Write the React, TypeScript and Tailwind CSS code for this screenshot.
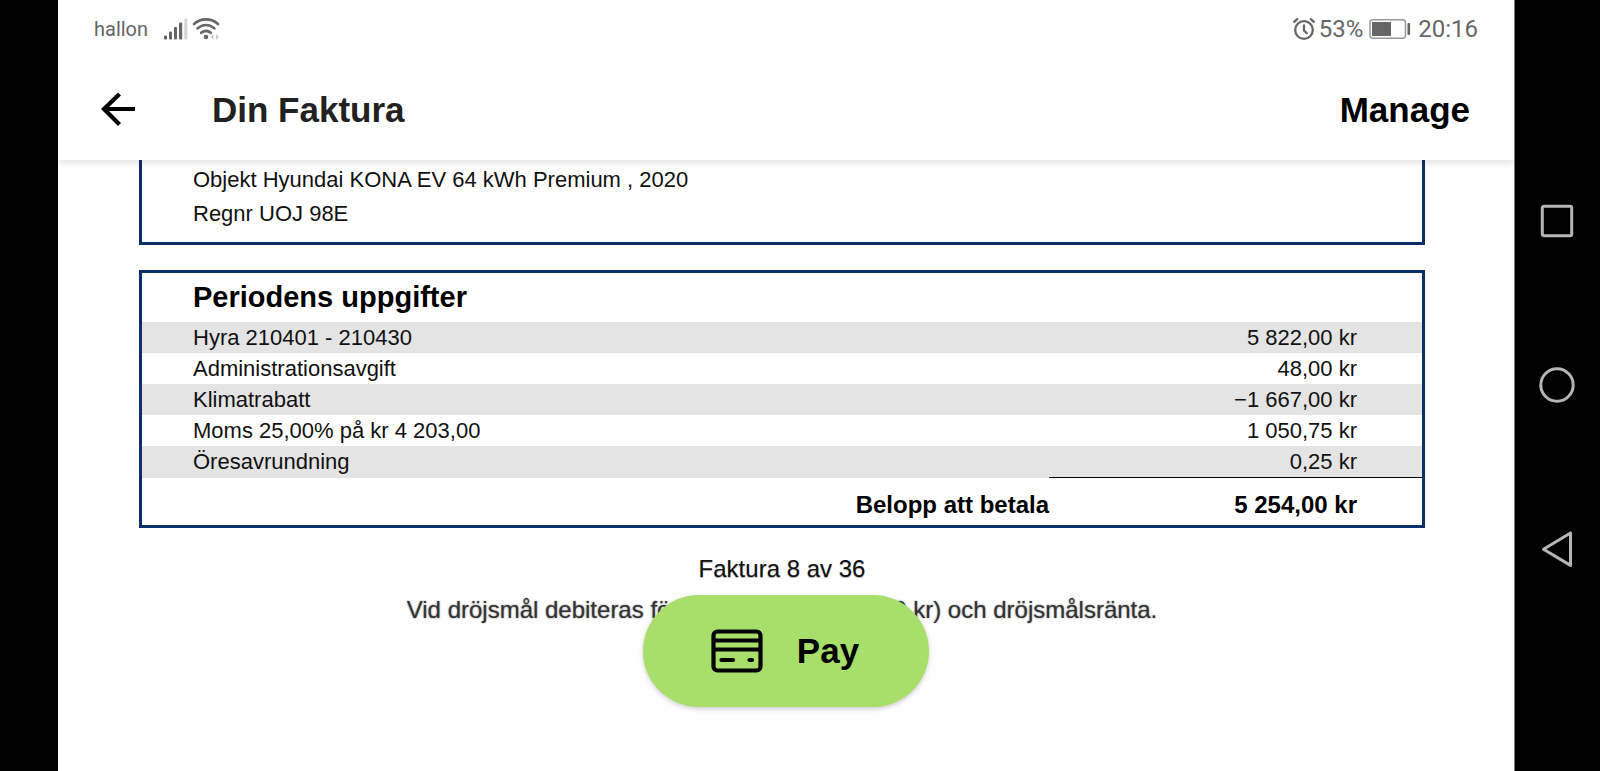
interface InvoiceRow {
  label: string;
  amount: string;
}

const rows: InvoiceRow[] = [
  { label: 'Hyra 210401 - 210430', amount: '5 822,00 kr' },
  { label: 'Administrationsavgift', amount: '48,00 kr' },
  { label: 'Klimatrabatt', amount: '−1 667,00 kr' },
  { label: 'Moms 25,00% på kr 4 203,00', amount: '1 050,75 kr' },
  { label: 'Öresavrundning', amount: '0,25 kr' },
];

function StatusBar() {
  return (
    <div className="flex h-[58px] items-center justify-between pl-9 pr-9 font-[Roboto,sans-serif] text-[#666666]">
      <div className="flex items-center">
        <span className="text-xl leading-6">hallon</span>
        <svg className="ml-4 h-[22px] w-6" viewBox="0 0 24 22" fill="#666666">
          <rect x="0" y="17.5" width="3" height="4" rx="1" />
          <rect x="5" y="13.5" width="3" height="8" rx="1" />
          <rect x="10" y="9" width="3" height="12.5" rx="1" />
          <rect x="15" y="4.5" width="3.2" height="17" rx="1" />
          <rect x="20.3" y="0.5" width="3" height="21" rx="1" fill="#d4d4d4" />
        </svg>
        <svg className="ml-1 h-[22px] w-7" viewBox="0 0 28 22" fill="none" stroke="#666666" strokeWidth="2.6" strokeLinecap="round">
          <path d="M2 6C8.8-.2 19.2-.2 26 6" />
          <path d="M5.5 10.4c5-4.6 12-4.6 17 0" />
          <path d="M9.2 14.8c3-2.5 6.6-2.5 9.6 0" />
          <circle cx="14" cy="19" r="2.3" fill="#666666" stroke="none" />
          <path d="M21.5 16v6l-3-3zM24 16v6l3-3z" fill="#cccccc" stroke="none" />
        </svg>
      </div>
      <div className="flex items-center text-2xl">
        <svg className="mr-1 h-[22px] w-[22px]" viewBox="0 0 22 22" fill="none" stroke="#666666" strokeWidth="2.3" strokeLinecap="round">
          <circle cx="11" cy="12" r="8.8" />
          <path d="M11 7.5v4.9l2.8 2.8M1.2 3.8l3-2.6M20.8 3.8l-3-2.6" />
        </svg>
        <span>53%</span>
        <svg className="ml-1.5 mr-[7px] h-5 w-[42px]" viewBox="0 0 42 20" fill="#666666">
          <rect x="1" y="0.8" width="35.5" height="18.4" rx="3" fill="none" stroke="#999999" strokeWidth="1.5" />
          <rect x="3" y="3" width="19" height="14" />
          <rect x="38.5" y="4" width="2.6" height="12" rx="1" />
        </svg>
        <span>20:16</span>
      </div>
    </div>
  );
}

function SystemNav() {
  return (
    <nav className="flex w-[86px] shrink-0 flex-col items-center justify-center gap-32 border-l border-[#777777] bg-black pr-0.5 pb-0.5">
      <button aria-label="Recent apps">
        <svg className="block size-9" viewBox="0 0 36 36" fill="none" stroke="#b5b5b5" strokeWidth="3">
          <rect x="3.3" y="3.3" width="29.4" height="29.4" rx="1.5" />
        </svg>
      </button>
      <button aria-label="Home">
        <svg className="block size-9" viewBox="0 0 36 36" fill="none" stroke="#b5b5b5" strokeWidth="3">
          <circle cx="18" cy="18" r="16.2" />
        </svg>
      </button>
      <button aria-label="Back">
        <svg className="block size-9" viewBox="0 0 36 36" fill="none" stroke="#b5b5b5" strokeWidth="3" strokeLinejoin="round">
          <path d="M31.5 2v32.4L4.5 18.2z" />
        </svg>
      </button>
    </nav>
  );
}

export default function App() {
  return (
    <div className="flex min-h-screen bg-black font-['Liberation_Sans',Arial,sans-serif]">
      <div className="w-[58px] shrink-0" />

      <div className="relative flex-1 overflow-hidden bg-white">
        <header className="relative bg-white shadow-[0_2px_8px_rgba(0,0,0,0.14)]">
          <StatusBar />
          <div className="flex items-center justify-between pt-[26px] pb-6 pl-[42px] pr-11">
            <div className="flex items-center">
              <button aria-label="Go back">
                <svg className="block size-9" viewBox="0 0 36 36" fill="none" stroke="#000000" strokeWidth="4.2">
                  <path d="M35 17H4M19.5 2L4 17l15.5 15.5" />
                </svg>
              </button>
              <h1 className="ml-[76px] text-[35px] leading-[52px] font-bold text-[#212121]">Din Faktura</h1>
            </div>
            <button className="text-[35px] leading-[52px] font-bold text-black">Manage</button>
          </div>
        </header>

        <main className="pl-[81px] pr-[89px] text-[22px] text-[#111111]">
          <section className="border-x-[3px] border-b-[3px] border-[#0b2f69] pt-[3px] pb-[11px] pl-[51px] leading-[34px]">
            <p>Objekt Hyundai KONA EV 64 kWh Premium , 2020</p>
            <p>Regnr UOJ 98E</p>
          </section>

          <section className="mt-[25px] border-[3px] border-[#0b2f69]">
            <h2 className="pb-px pl-[51px] text-[29px] leading-[48px] font-bold text-black">Periodens uppgifter</h2>
            <table className="w-full border-collapse leading-[31px]">
              <tbody>
                {rows.map((row) => (
                  <tr key={row.label} className="odd:bg-[#e4e4e4]">
                    <td className="p-0 pl-[51px]">{row.label}</td>
                    <td className="w-[373px] p-0 pr-[65px] text-right">{row.amount}</td>
                  </tr>
                ))}
              </tbody>
              <tfoot>
                <tr className="text-2xl leading-10 font-bold text-black">
                  <th scope="row" className="p-0 pt-[7px] text-right">Belopp att betala</th>
                  <td className="border-t border-black p-0 pt-[7px] pr-[65px] text-right">5 254,00 kr</td>
                </tr>
              </tfoot>
            </table>
          </section>

          <div className="pt-5 text-center text-2xl leading-[41px]">
            <p className="[text-shadow:0_1px_1px_#aaaaaa]">Faktura 8 av 36</p>
            <p className="text-[#333333] [text-shadow:0_0_2px_#777777]">
              Vid dröjsmål debiteras förseningsavgift (450,00 kr) och dröjsmålsränta.
            </p>
          </div>
        </main>

        {/* floating pay button */}
        <div className="absolute inset-x-0 bottom-16 flex justify-center">
          <button className="flex h-28 items-center gap-[34px] rounded-full bg-[#a8de6a] pr-[70px] pl-[68px] text-[35px] font-bold text-black shadow-[0_2px_5px_rgba(0,0,0,0.2)]">
            <svg className="h-11 w-[52px]" viewBox="0 0 52 44" fill="none" stroke="#000000" strokeWidth="4.2">
              <rect x="2.5" y="2.5" width="47" height="39" rx="4" />
              <path d="M3 11.5h46M3 20.5h46" />
              <path d="M10.5 31H22M38.5 31H41" strokeLinecap="round" />
            </svg>
            Pay
          </button>
        </div>
      </div>

      <SystemNav />
    </div>
  );
}
